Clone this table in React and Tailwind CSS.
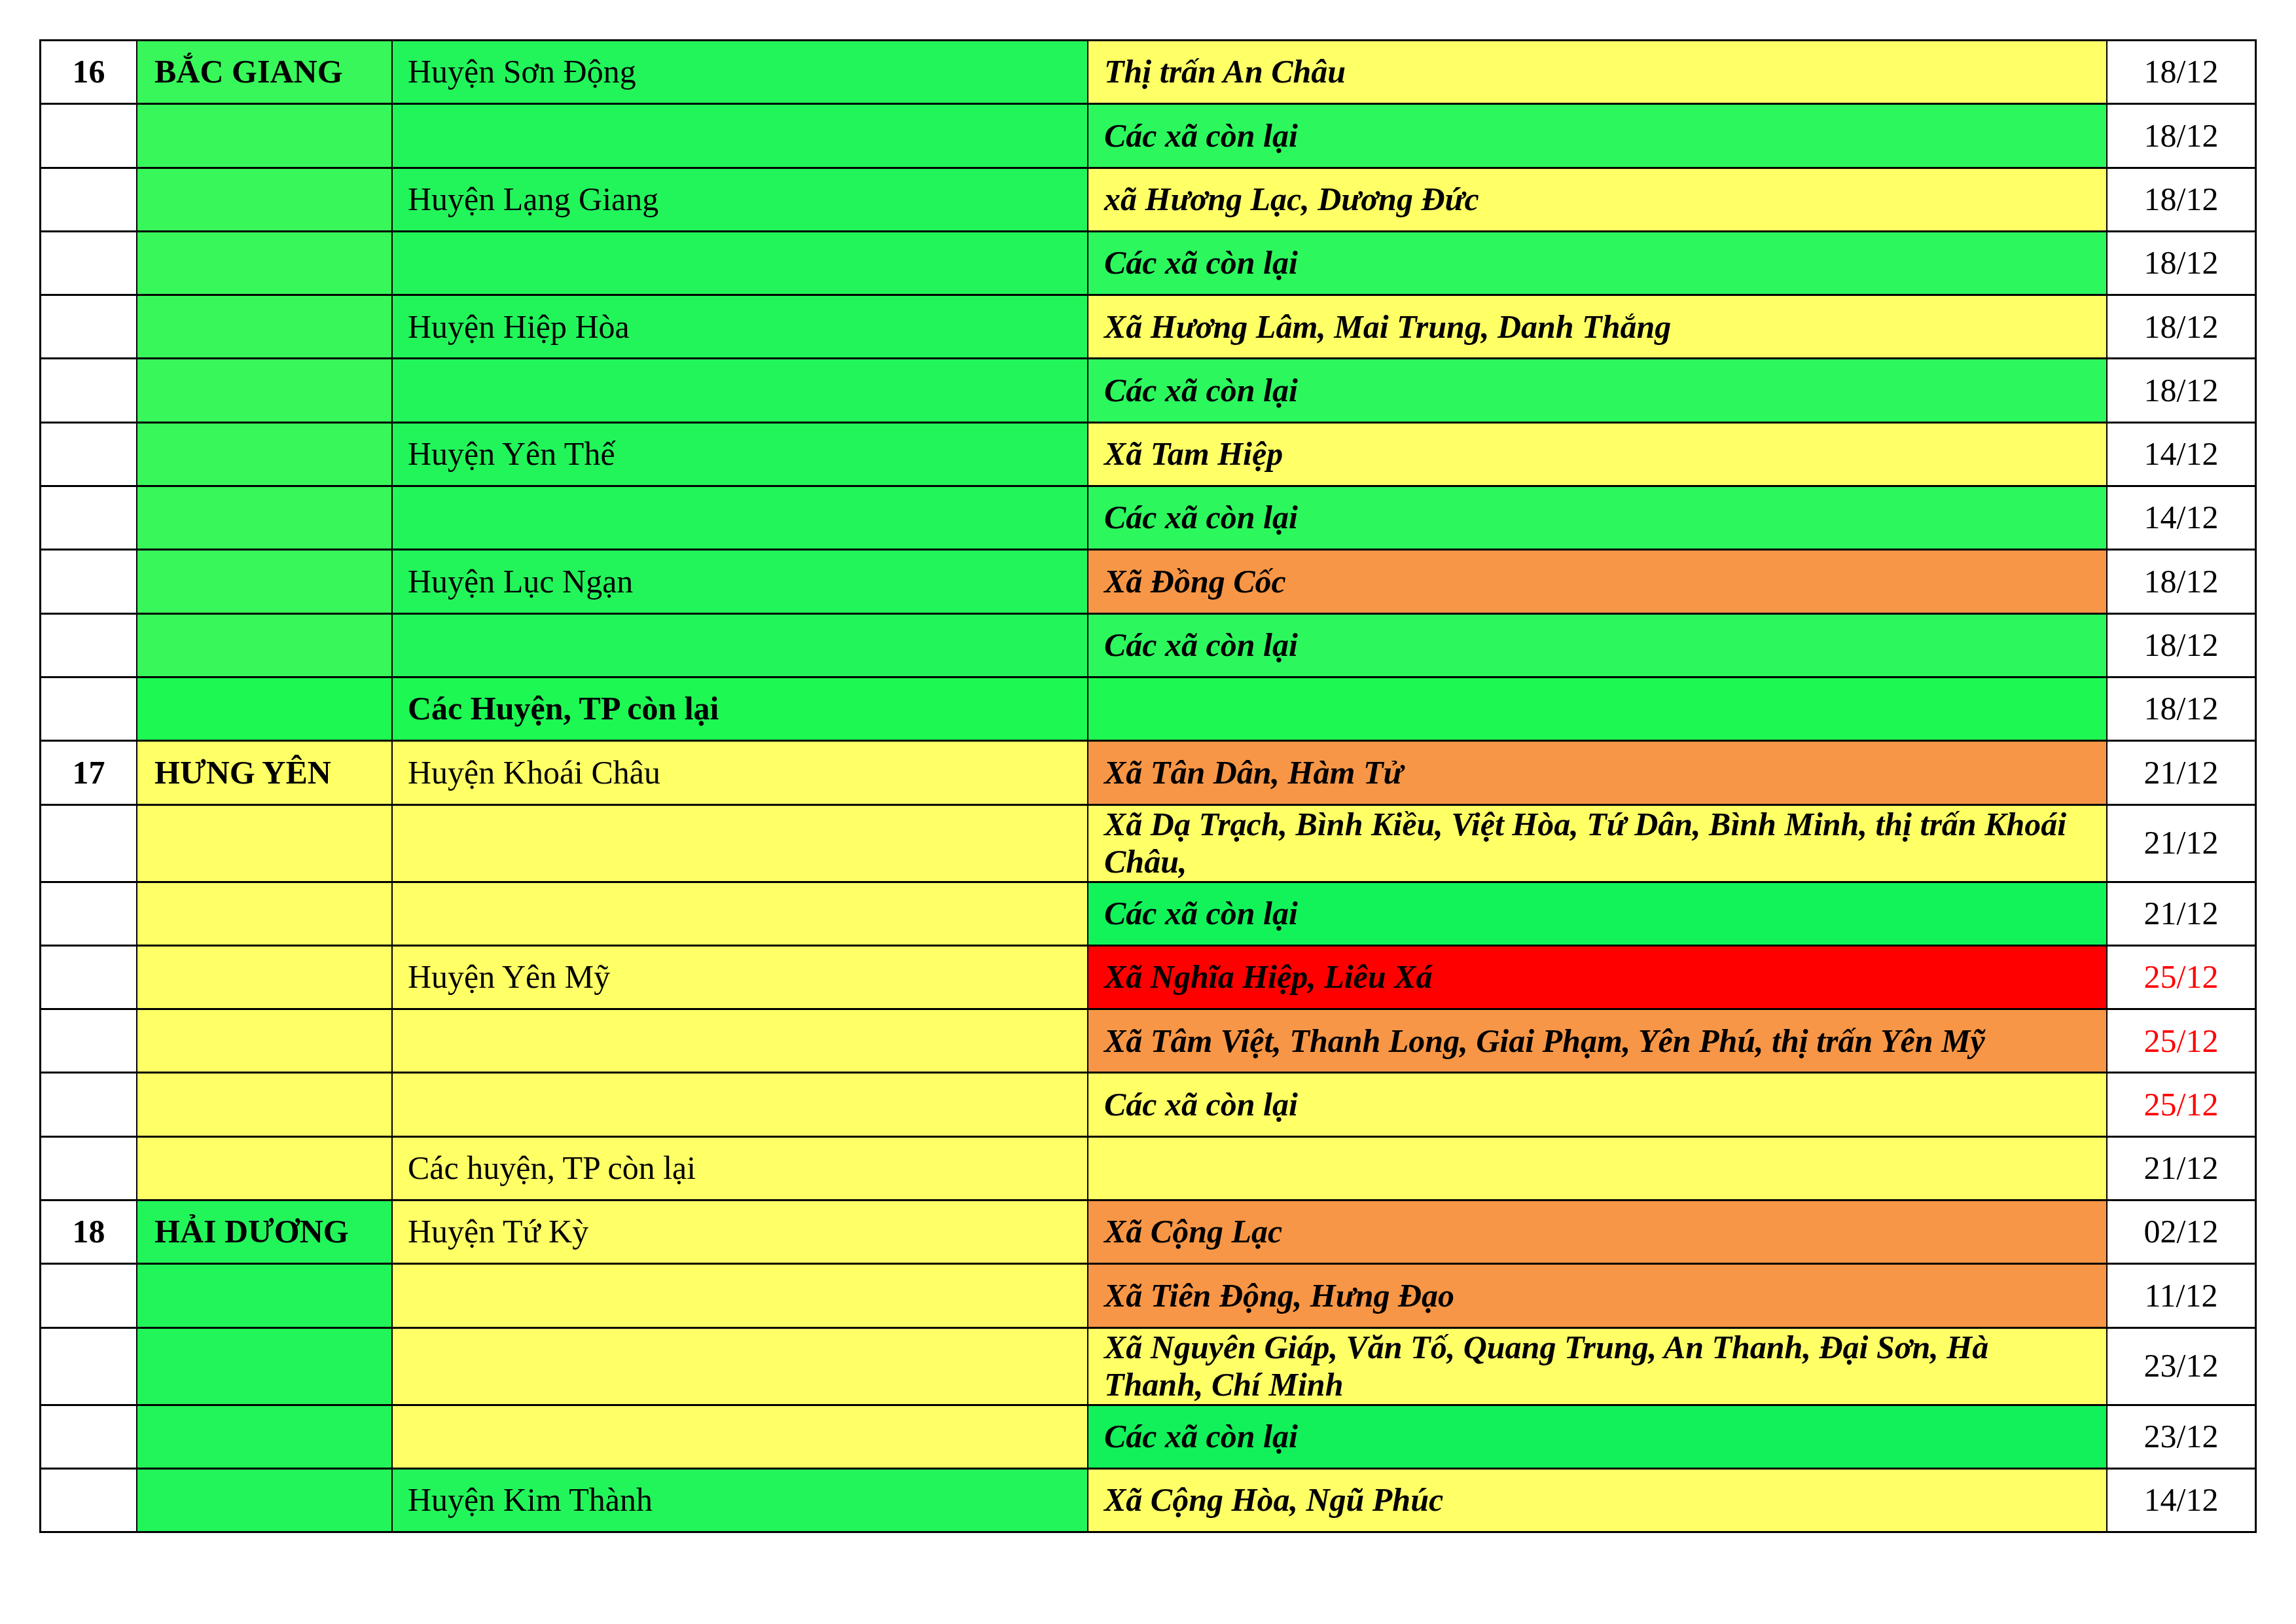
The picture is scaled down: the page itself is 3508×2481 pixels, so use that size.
import React from "react";

const Y = "bg-[#ffff66]";
const O = "bg-[#f79646]";
const R = "bg-[#ff0000]";
const G2 = "bg-[#38f75a]";
const G3 = "bg-[#22f55a]";
const G4 = "bg-[#2cf85e]";
const GD = "bg-[#1df853]";
const GH = "bg-[#12f35a]";

const rows = [
  { no: "16", prov: "BẮC GIANG", c2: G2, dist: "Huyện Sơn Động", c3: G3, com: "Thị trấn An Châu", c4: Y, date: "18/12" },
  { c2: G2, c3: G3, com: "Các xã còn lại", c4: G4, date: "18/12" },
  { c2: G2, dist: "Huyện Lạng Giang", c3: G3, com: "xã Hương Lạc, Dương Đức", c4: Y, date: "18/12" },
  { c2: G2, c3: G3, com: "Các xã còn lại", c4: G4, date: "18/12" },
  { c2: G2, dist: "Huyện Hiệp Hòa", c3: G3, com: "Xã Hương Lâm, Mai Trung, Danh Thắng", c4: Y, date: "18/12" },
  { c2: G2, c3: G3, com: "Các xã còn lại", c4: G4, date: "18/12" },
  { c2: G2, dist: "Huyện Yên Thế", c3: G3, com: "Xã Tam Hiệp", c4: Y, date: "14/12" },
  { c2: G2, c3: G3, com: "Các xã còn lại", c4: G4, date: "14/12" },
  { c2: G2, dist: "Huyện Lục Ngạn", c3: G3, com: "Xã Đồng Cốc", c4: O, date: "18/12" },
  { c2: G2, c3: G3, com: "Các xã còn lại", c4: G4, date: "18/12" },
  { c2: GD, dist: "Các Huyện, TP còn lại", distBold: true, c3: GD, c4: GD, date: "18/12" },
  { no: "17", prov: "HƯNG YÊN", c2: Y, dist: "Huyện Khoái Châu", c3: Y, com: "Xã Tân Dân, Hàm Tử", c4: O, date: "21/12" },
  { c2: Y, c3: Y, com: ["Xã Dạ Trạch, Bình Kiều, Việt Hòa, Tứ Dân, Bình Minh, thị trấn Khoái", "Châu,"], c4: Y, date: "21/12" },
  { c2: Y, c3: Y, com: "Các xã còn lại", c4: GH, date: "21/12" },
  { c2: Y, dist: "Huyện Yên Mỹ", c3: Y, com: "Xã Nghĩa Hiệp, Liêu Xá", c4: R, date: "25/12", red: true },
  { c2: Y, c3: Y, com: "Xã Tâm Việt, Thanh Long, Giai Phạm, Yên Phú, thị trấn Yên Mỹ", c4: O, date: "25/12", red: true },
  { c2: Y, c3: Y, com: "Các xã còn lại", c4: Y, date: "25/12", red: true },
  { c2: Y, dist: "Các huyện, TP còn lại", c3: Y, c4: Y, date: "21/12" },
  { no: "18", prov: "HẢI DƯƠNG", c2: G3, dist: "Huyện Tứ Kỳ", c3: Y, com: "Xã Cộng Lạc", c4: O, date: "02/12" },
  { c2: G3, c3: Y, com: "Xã Tiên Động, Hưng Đạo", c4: O, date: "11/12" },
  { c2: G3, c3: Y, com: ["Xã Nguyên Giáp, Văn Tố, Quang Trung, An Thanh, Đại Sơn, Hà", "Thanh, Chí Minh"], c4: Y, date: "23/12" },
  { c2: G3, c3: Y, com: "Các xã còn lại", c4: "bg-[#12f05a]", date: "23/12" },
  { c2: G3, dist: "Huyện Kim Thành", c3: G3, com: "Xã Cộng Hòa, Ngũ Phúc", c4: Y, date: "14/12" },
];

function Row({ r }) {
  const com = Array.isArray(r.com) ? (
    <>
      {r.com[0]}
      <br />
      {r.com[1]}
    </>
  ) : (
    r.com
  );
  return (
    <div className="flex min-h-[97.3px] border-b-[3px] border-black">
      <div className="w-[147px] shrink-0 flex items-center justify-center border-r-[2px] border-black bg-white font-bold">
        {r.no}
      </div>
      <div className={`w-[390px] shrink-0 flex items-center pl-[26px] border-r-[2px] border-black font-bold ${r.c2}`}>
        {r.prov}
      </div>
      <div className={`w-[1063px] shrink-0 flex items-center pl-[23px] border-r-[2px] border-black ${r.distBold ? "font-bold" : ""} ${r.c3}`}>
        {r.dist}
      </div>
      <div className={`w-[1557px] shrink-0 flex items-center pl-[24px] pr-[10px] border-r-[2px] border-black font-bold italic ${r.c4}`}>
        <div>{com}</div>
      </div>
      <div className={`w-[225px] shrink-0 flex items-center justify-center bg-white ${r.red ? "text-[#ff0000]" : "text-black"}`}>
        {r.date}
      </div>
    </div>
  );
}

export default function App() {
  return (
    <div className="w-[3508px] h-[2481px] bg-white pt-[60px] pl-[60px] font-['Liberation_Serif','Times_New_Roman',serif] text-[50px] leading-[1.15] text-black">
      <div className="w-[3388px] border-t-[3px] border-l-[3px] border-r-[3px] border-black">
        {rows.map((r, i) => (
          <Row key={i} r={r} />
        ))}
      </div>
    </div>
  );
}
